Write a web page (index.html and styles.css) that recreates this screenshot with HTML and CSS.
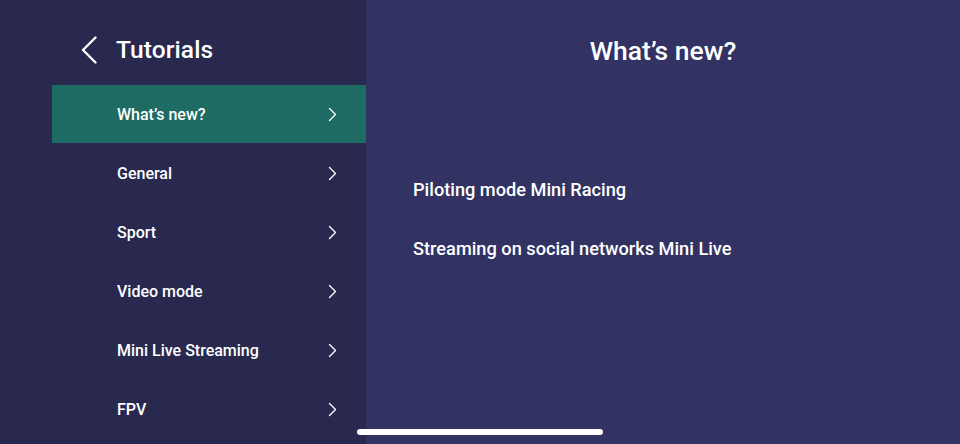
FILE: index.html
```html
<!DOCTYPE html>
<html>
<head>
<meta charset="utf-8">
<link rel="stylesheet" href="styles.css">
</head>
<body>
<div class="app">
  <aside class="side">
    <header class="side-head">
      <svg class="back" width="18" height="28" viewBox="0 0 18 28"><path d="M15.5 1.5 L3 14 L15.5 26.5" fill="none" stroke="#fff" stroke-width="2.4" stroke-linecap="round" stroke-linejoin="round"/></svg>
      <h1 class="side-title">Tutorials</h1>
    </header>
    <nav class="menu">
      <a class="item active"><span>What’s new?</span><svg class="chev" width="9" height="15" viewBox="0 0 9 15"><path d="M1.5 1.5 L7.5 7.5 L1.5 13.5" fill="none" stroke="#fff" stroke-width="1.4" stroke-linecap="round" stroke-linejoin="round"/></svg></a>
      <a class="item"><span>General</span><svg class="chev" width="9" height="15" viewBox="0 0 9 15"><path d="M1.5 1.5 L7.5 7.5 L1.5 13.5" fill="none" stroke="#fff" stroke-width="1.4" stroke-linecap="round" stroke-linejoin="round"/></svg></a>
      <a class="item"><span>Sport</span><svg class="chev" width="9" height="15" viewBox="0 0 9 15"><path d="M1.5 1.5 L7.5 7.5 L1.5 13.5" fill="none" stroke="#fff" stroke-width="1.4" stroke-linecap="round" stroke-linejoin="round"/></svg></a>
      <a class="item"><span>Video mode</span><svg class="chev" width="9" height="15" viewBox="0 0 9 15"><path d="M1.5 1.5 L7.5 7.5 L1.5 13.5" fill="none" stroke="#fff" stroke-width="1.4" stroke-linecap="round" stroke-linejoin="round"/></svg></a>
      <a class="item"><span>Mini Live Streaming</span><svg class="chev" width="9" height="15" viewBox="0 0 9 15"><path d="M1.5 1.5 L7.5 7.5 L1.5 13.5" fill="none" stroke="#fff" stroke-width="1.4" stroke-linecap="round" stroke-linejoin="round"/></svg></a>
      <a class="item"><span>FPV</span><svg class="chev" width="9" height="15" viewBox="0 0 9 15"><path d="M1.5 1.5 L7.5 7.5 L1.5 13.5" fill="none" stroke="#fff" stroke-width="1.4" stroke-linecap="round" stroke-linejoin="round"/></svg></a>
    </nav>
  </aside>
  <main class="content">
    <h2 class="title">What’s new?</h2>
    <ul class="links">
      <li>Piloting mode Mini Racing</li>
      <li>Streaming on social networks Mini Live</li>
    </ul>
  </main>
  <div class="home-bar"></div>
</div>
</body>
</html>
```
FILE: styles.css
```css
* { box-sizing: border-box; }
html, body { margin: 0; padding: 0; }
body {
  width: 960px;
  height: 444px;
  overflow: hidden;
  font-family: "Roboto", "Liberation Sans", sans-serif;
  color: #fff;
  background: #323363;
}
.app {
  position: relative;
  display: flex;
  width: 960px;
  height: 444px;
}
.side {
  width: 366px;
  flex: none;
  background: #29294f;
  padding-left: 52px;
}
.side-head {
  display: flex;
  align-items: center;
  height: 85px;
  padding: 14px 0 0 28px;
}
.back { margin-right: 18px; margin-top: 0; }
.side-title {
  margin: 0;
  font-size: 24.5px;
  font-weight: 500;
  letter-spacing: 0.1px;
}
.menu { display: flex; flex-direction: column; }
.item {
  display: flex;
  align-items: center;
  justify-content: space-between;
  height: 59px;
  padding: 0 29px 0 65px;
  font-size: 16px;
  font-weight: 500;
}
.item.active { background: #1e6b64; height: 58px; margin-bottom: 1px; }
.content {
  flex: 1;
  display: flex;
  flex-direction: column;
  align-items: stretch;
}
.title {
  margin: 0;
  height: 100px;
  padding-top: 35px;
  text-align: center;
  font-size: 26.5px;
  font-weight: 500;
}
.links {
  list-style: none;
  margin: 0;
  padding: 78px 0 0 47px;
  font-size: 18.2px;
  font-weight: 500;
}
.links li { height: 59px; line-height: 24px; }
.home-bar {
  position: absolute;
  left: 357px;
  top: 429px;
  width: 246px;
  height: 6px;
  border-radius: 3px;
  background: #fff;
}
```
